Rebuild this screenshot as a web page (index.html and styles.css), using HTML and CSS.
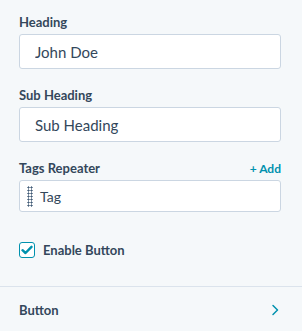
FILE: index.html
```html
<!DOCTYPE html>
<html lang="en">
<head>
  <meta charset="UTF-8" />
  <title>Module fields</title>
  <link rel="stylesheet" href="styles.css">
</head>
<body>
  <div class="panel">
    <div class="fields">
      <div class="field">
        <label class="field-label">Heading</label>
        <input class="text-input" type="text" value="John Doe">
      </div>

      <div class="field">
        <label class="field-label">Sub Heading</label>
        <input class="text-input" type="text" value="Sub Heading">
      </div>

      <div class="field">
        <div class="label-row">
          <label class="field-label">Tags Repeater</label>
          <a href="#" class="add-link">+ Add</a>
        </div>
        <div class="repeater-item">
          <span class="drag-handle"></span>
          <span class="tag-text">Tag</span>
        </div>
      </div>

      <label class="checkbox-row">
        <span class="checkbox">
          <svg width="12" height="10" viewBox="0 0 12 10"><path d="M1.5 5.2 L4.5 8 L10.5 1.8" fill="none" stroke="#0091ae" stroke-width="2.4" stroke-linecap="round" stroke-linejoin="round"/></svg>
        </span>
        Enable Button
      </label>
    </div>

    <div class="group-row">
      <span>Button</span>
      <svg width="8" height="12" viewBox="0 0 8 12"><path d="M2 1.5 L6.5 6 L2 10.5" fill="none" stroke="#0091ae" stroke-width="1.5" stroke-linecap="round" stroke-linejoin="round"/></svg>
    </div>
  </div>
</body>
</html>
```

FILE: styles.css
```css
body {
  margin: 0;
  background-color: #f5f8fa;
  font-family: "Lato", "Open Sans", sans-serif;
  color: #33475b;
}

.panel {
  width: 302px;
  height: 331px;
  box-sizing: border-box;
}

.fields {
  padding: 14px 21px 28px 19px;
}

.field {
  margin-bottom: 18px;
}

.field-label {
  display: block;
  font-size: 13px;
  font-weight: 700;
  line-height: 16px;
  margin-bottom: 4px;
}

.label-row {
  display: flex;
  justify-content: space-between;
  align-items: baseline;
}

.add-link {
  color: #0091ae;
  font-size: 12px;
  font-weight: 700;
  text-decoration: none;
}

.text-input {
  display: block;
  width: 100%;
  height: 35px;
  box-sizing: border-box;
  border: 1px solid #cbd6e2;
  border-radius: 3px;
  background: #fff;
  padding: 0 15px;
  font-family: inherit;
  font-size: 15px;
  color: #33475b;
}

.repeater-item {
  display: flex;
  align-items: center;
  height: 32px;
  box-sizing: border-box;
  border: 1px solid #cbd6e2;
  border-radius: 3px;
  background: #fff;
  padding-left: 7px;
}

.drag-handle {
  width: 6px;
  height: 21px;
  margin-right: 7px;
  background-image: radial-gradient(circle, #425b76 0.9px, transparent 1.2px);
  background-size: 3px 3px;
}

.tag-text {
  font-size: 14px;
}

.checkbox-row {
  display: flex;
  align-items: center;
  font-size: 13px;
  font-weight: 700;
  margin-top: 30px;
}

.checkbox {
  width: 16px;
  height: 16px;
  box-sizing: border-box;
  border: 1.5px solid #0091ae;
  border-radius: 3px;
  background: #fff;
  display: flex;
  align-items: center;
  justify-content: center;
  margin-right: 8px;
}

.group-row {
  border-top: 1px solid #dbe3ec;
  display: flex;
  justify-content: space-between;
  align-items: center;
  height: 46px;
  padding: 0 23px 0 19px;
  font-size: 13px;
  font-weight: 700;
}
```
